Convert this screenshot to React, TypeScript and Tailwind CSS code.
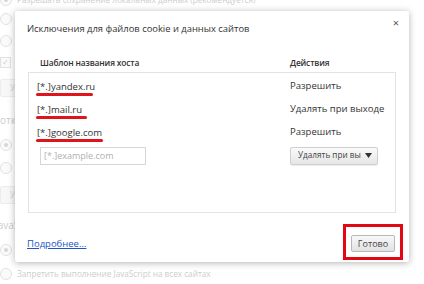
import React from "react";

const font = { fontFamily: '"Open Sans", "Noto Sans", sans-serif' };

function Radio({ on = false }: { on?: boolean }) {
  return (
    <div className="w-[12px] h-[12px] rounded-full border border-[#e2e2e2] bg-[#fafafa] flex items-center justify-center shrink-0">
      {on && <div className="w-[4px] h-[4px] rounded-full bg-[#d6d6d6]" />}
    </div>
  );
}

function Marked({ text, w }: { text: string; w: string }) {
  return (
    <div className="flex flex-col items-start">
      <span className="leading-[12px]">{text}</span>
      <div className={`h-[3px] -ml-[1px] bg-[#e0141b] rounded-full ${w}`} />
    </div>
  );
}

function BgButton() {
  return (
    <div className="h-[18px] w-[30px] border border-[#ececec] bg-[#f7f7f7] rounded-[2px] flex items-center pl-[9px] text-[8.5px] text-[#d4d4d4]">Уп</div>
  );
}

export default function App() {
  return (
    <div className="relative w-[424px] h-[284px] overflow-hidden bg-white text-[9.5px]" style={font}>
      {/* faded settings page */}
      <div className="flex flex-col text-[#cdcdcd] text-[8.2px] -mt-[7px]">
        <div className="h-[14px] flex items-center gap-[5px]">
          <Radio on />
          <span>Разрешать сохранение локальных данных (рекомендуется)</span>
        </div>
        <div className="h-[24px] flex items-center"><Radio /></div>
        <div className="h-[20px] flex items-center"><Radio /></div>
        <div className="h-[22px] flex items-center">
          <div className="w-[11px] h-[11px] border border-[#e2e2e2] bg-[#fafafa] flex items-center justify-center text-[8px] leading-none text-[#cfcfcf]">✓</div>
        </div>
        <div className="h-[30px] flex items-center"><BgButton /></div>
        <div className="h-[34px] flex items-center text-[10px]">отключение</div>
        <div className="h-[16px] flex items-center"><Radio on /></div>
        <div className="h-[30px] flex items-center"><Radio /></div>
        <div className="h-[24px] flex items-center"><BgButton /></div>
        <div className="h-[36px] flex items-center text-[10px] -ml-[5px]">JavaScript</div>
        <div className="h-[14px] flex items-center"><Radio on /></div>
        <div className="h-[34px] flex items-center gap-[5px]">
          <Radio />
          <span>Запретить выполнение JavaScript на всех сайтах</span>
        </div>
      </div>

      {/* dialog */}
      <div className="absolute left-[15px] top-[11px] w-[394px] h-[251px] bg-white rounded-[2px] shadow-[0_1px_7px_rgba(0,0,0,0.3)] flex flex-col px-[13px] text-[#333]">
        <div className="flex items-start justify-between pt-[12px]">
          <div className="text-[9.4px] leading-[12px] text-[#333] -ml-[1px] whitespace-nowrap">Исключения для файлов cookie и данных сайтов</div>
          <div className="text-[11px] leading-[12px] text-[#555] -mr-[3px] -mt-[6px]">×</div>
        </div>
        <div className="flex mt-[22px] font-semibold text-[8.4px] leading-[12px] text-[#333] tracking-[-0.15px] whitespace-nowrap">
          <div className="w-[262px] pl-[12px]">Шаблон названия хоста</div>
          <div>Действия</div>
        </div>
        <div className="mt-[3px] h-[141px] border border-[#e3e3e3] flex flex-col pt-[2px] text-[#333] whitespace-nowrap">
          <div className="h-[23px] flex items-center">
            <div className="w-[261px] shrink-0 pl-[8px] pt-[3px]"><Marked text="[*.]yandex.ru" w="w-[57px]" /></div>
            <div>Разрешить</div>
          </div>
          <div className="h-[23px] flex items-center">
            <div className="w-[261px] shrink-0 pl-[8px] pt-[3px]"><Marked text="[*.]mail.ru" w="w-[51px]" /></div>
            <div>Удалять при выходе</div>
          </div>
          <div className="h-[23px] flex items-center">
            <div className="w-[261px] shrink-0 pl-[8px] pt-[3px]"><Marked text="[*.]google.com" w="w-[67px]" /></div>
            <div>Разрешить</div>
          </div>
          <div className="h-[23px] flex items-center">
            <div className="w-[261px] shrink-0 pl-[11px]">
              <div className="w-[106px] h-[18px] border border-[#d6d6d6] flex items-center pl-[3px] text-[#b0b0b0] text-[9px]">[*.]example.com</div>
            </div>
            <div className="w-[88px] shrink-0 h-[18px] border border-[#cfcfcf] rounded-[2px] bg-gradient-to-b from-[#fafafa] to-[#e6e6e6] flex items-center justify-between pl-[7px] pr-[5px] text-[8.2px] text-[#444] shadow-[0_1px_1px_rgba(0,0,0,0.08)]">
              <span>Удалять при вы</span>
              <svg width="7" height="5" viewBox="0 0 7 5"><path d="M0 0h7L3.5 5z" fill="#333" /></svg>
            </div>
          </div>
        </div>
        <div className="flex items-start justify-between mt-[11px]">
          <a className="text-[#2255c4] underline mt-[14px] -ml-[1px] leading-[12px]">Подробнее...</a>
          <div className="border-[3px] border-[#e30613] px-[5px] pt-[8px] pb-[5px] -mr-[7px]">
            <div className="w-[44px] h-[17px] border border-[#b8b8b8] rounded-[2px] bg-gradient-to-b from-[#f8f8f8] to-[#e2e2e2] flex items-center justify-center text-[9px] text-[#444]">Готово</div>
          </div>
        </div>
      </div>
    </div>
  );
}
